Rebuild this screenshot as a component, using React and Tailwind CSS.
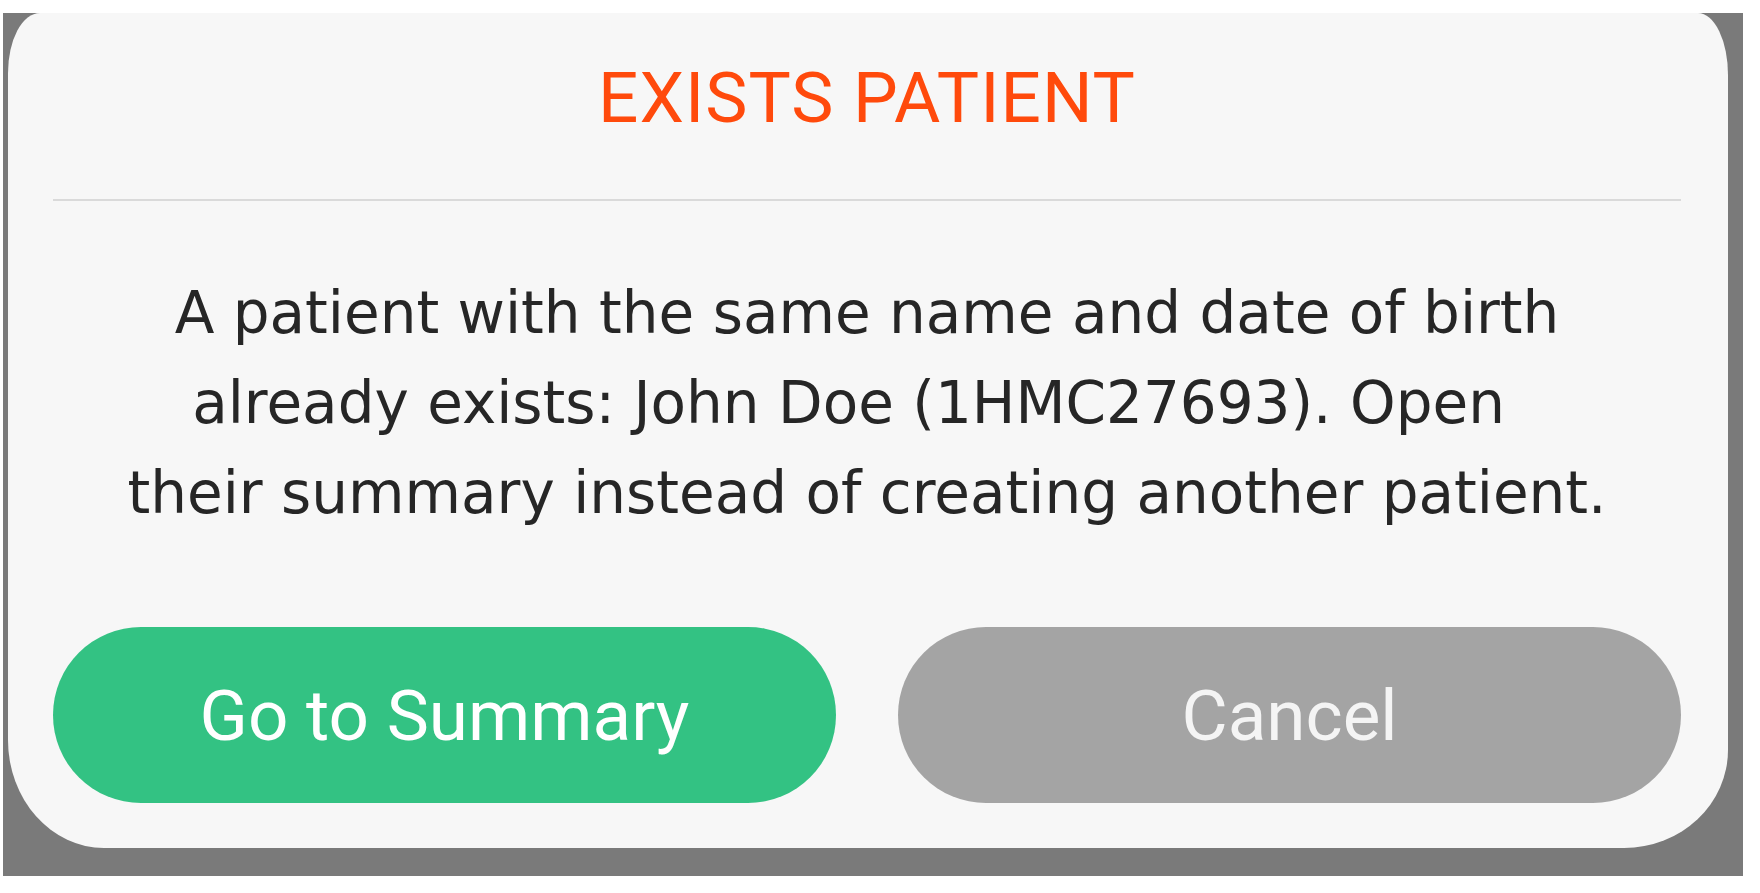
import React from "react";

export default function App() {
  return (
    <div className="w-[1760px] h-[893px] bg-white overflow-hidden">
      <div className="ml-[3px] mt-[13px] w-[1740px] h-[863px] bg-[#7a7a7a]">
        <div className="ml-[5px] w-[1720px] h-[835px] bg-[#f7f7f7] rounded-[32px_30px_104px_96px/60px_62px_98px_108px] pl-[45px] pr-[47px] flex flex-col">
          <h1 className="pt-[43px] text-center font-['Roboto',sans-serif] text-[71px] leading-[83px] tracking-[1px] font-normal text-[#ff4a0c]">
            EXISTS PATIENT
          </h1>
          <div className="mt-[60px] h-[2px] bg-[#dadada]" />
          <p className="mt-[67px] text-center font-['DejaVu_Sans',sans-serif] text-[58px] leading-[90px] text-[#262626] whitespace-nowrap">
            <span className="block">A patient with the same name and date of birth</span>
            <span className="block">already exists: John Doe (1HMC27693). Open{"\u00a0\u00a0"}</span>
            <span className="block">their summary instead of creating another patient.</span>
          </p>
          <div className="mt-[89px] flex gap-[62px]">
            <button className="w-[783px] h-[176px] rounded-full bg-[#33c283] text-white font-['Roboto',sans-serif] text-[71px] leading-none flex items-center justify-center">
              Go to Summary
            </button>
            <button className="w-[783px] h-[176px] rounded-full bg-[#a4a4a4] text-[#f4f4f4] font-['Roboto',sans-serif] text-[71px] leading-none flex items-center justify-center">
              Cancel
            </button>
          </div>
        </div>
      </div>
    </div>
  );
}
